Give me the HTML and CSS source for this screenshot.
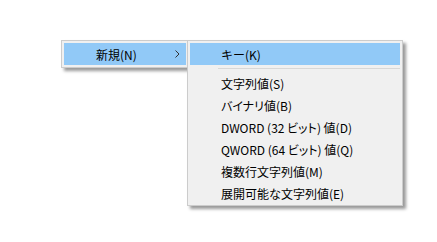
FILE: index.html
```html
<!DOCTYPE html>
<html>
<head>
    <title>新規</title>
    <link rel="stylesheet" href="styles.css">
</head>
<body>
    <div class="desktop">
        <div class="menu parent-menu">
            <div class="item active">
                <span class="label">新規(N)</span>
                <svg class="arrow" width="5" height="8" viewBox="0 0 5 8">
                    <path d="M0.5 0.5 L4 4 L0.5 7.5" fill="none" stroke="#333" stroke-width="1"/>
                </svg>
            </div>
        </div>

        <div class="menu sub-menu">
            <div class="item active"><span class="label">キー(K)</span></div>
            <div class="separator"></div>
            <div class="item"><span class="label">文字列値(S)</span></div>
            <div class="item"><span class="label"><span class="kana">バイナリ</span>値(B)</span></div>
            <div class="item"><span class="label">DWORD (32 <span class="kana">ビット</span>) 値(D)</span></div>
            <div class="item"><span class="label">QWORD (64 <span class="kana">ビット</span>) 値(Q)</span></div>
            <div class="item"><span class="label">複数行文字列値(M)</span></div>
            <div class="item"><span class="label">展開可能な文字列値(E)</span></div>
        </div>
    </div>
</body>
</html>
```

FILE: styles.css
```css
html, body {
    margin: 0;
    padding: 0;
    background: #fff;
}
.desktop {
    position: relative;
    width: 437px;
    height: 242px;
    font-family: "Noto Sans CJK JP", sans-serif;
    font-size: 12px;
    color: #000;
}
.menu {
    position: absolute;
    background: #f0f0f0;
    border: 1px solid #cccccc;
    padding: 2px 2px 1px 2px;
    box-shadow: 3px 3px 3px rgba(0, 0, 0, 0.4);
}
.parent-menu {
    left: 61px;
    top: 40px;
    width: 122px;
    padding-bottom: 2px;
}
.sub-menu {
    left: 187px;
    top: 40px;
    width: 210px;
}
.item {
    display: flex;
    align-items: center;
    height: 22px;
    padding-left: 31px;
}
.parent-menu .item {
    padding-left: 32px;
    padding-right: 6px;
}
.item.active {
    background: #91c9f7;
}
.label {
    flex: 1;
    white-space: nowrap;
}
.kana {
    font-feature-settings: "palt";
}
.arrow {
    display: block;
}
.separator {
    height: 1px;
    background: #d7d7d7;
    margin: 3px 0 3px 28px;
}
```
